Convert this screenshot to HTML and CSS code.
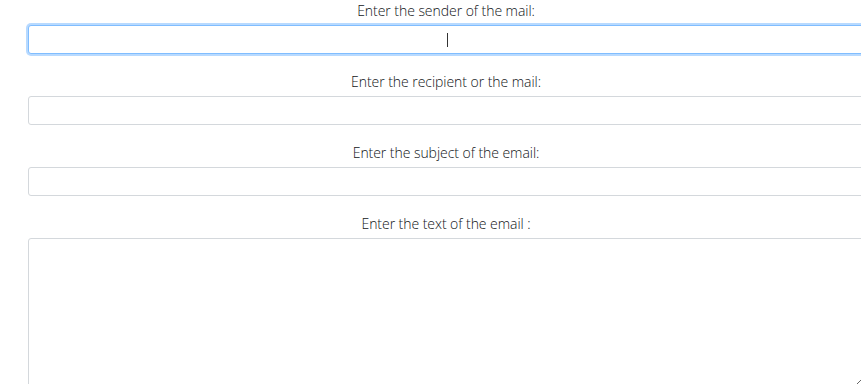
FILE: index.html
```html
<!DOCTYPE html>
<html lang="en">
<head>
<meta charset="utf-8">
<title>Send mail</title>
<link rel="stylesheet" href="styles.css">
</head>
<body>
<form class="mail-form">
  <div class="field">
    <label class="field-label" for="sender">Enter the sender of the mail:</label>
    <div class="control-wrap">
      <input class="control is-focused" id="sender" type="text">
      <span class="caret"></span>
    </div>
  </div>
  <div class="field">
    <label class="field-label" for="recipient">Enter the recipient or the mail:</label>
    <input class="control" id="recipient" type="text">
  </div>
  <div class="field">
    <label class="field-label" for="subject">Enter the subject of the email:</label>
    <input class="control" id="subject" type="text">
  </div>
  <div class="field">
    <label class="field-label" for="body">Enter the text of the email :</label>
    <textarea class="control control-area" id="body"></textarea>
  </div>
</form>
</body>
</html>
```

FILE: styles.css
```css
* { box-sizing: border-box; }

html, body {
  margin: 0;
  padding: 0;
  background: #ffffff;
  overflow: hidden;
}

body {
  font-family: "Open Sans", "Noto Sans", sans-serif;
  font-weight: 300;
  font-size: 14px;
  letter-spacing: -0.05px;
  color: #111417;
}

.mail-form {
  width: 836px;
  margin-left: 28px;
  padding-top: 1px;
  display: flex;
  flex-direction: column;
  gap: 18px;
}

.field {
  display: flex;
  flex-direction: column;
}

.field-label {
  display: block;
  text-align: center;
  line-height: 20px;
  margin-bottom: 4px;
}

.control-wrap {
  position: relative;
}

.control {
  display: block;
  width: 100%;
  height: 29px;
  padding: 4px 9px;
  font: inherit;
  color: #495057;
  text-align: center;
  background: #ffffff;
  border: 1px solid #d4d8dc;
  border-radius: 3px;
  outline: none;
}

.control.is-focused {
  border-color: #80bdff;
  box-shadow: 0 0 0 2px rgba(0, 123, 255, 0.28);
}

.caret {
  position: absolute;
  left: 419px;
  top: 8px;
  width: 1px;
  height: 14px;
  background: #333;
}

.control-area {
  height: 150px;
  resize: vertical;
  text-align: left;
}
```
